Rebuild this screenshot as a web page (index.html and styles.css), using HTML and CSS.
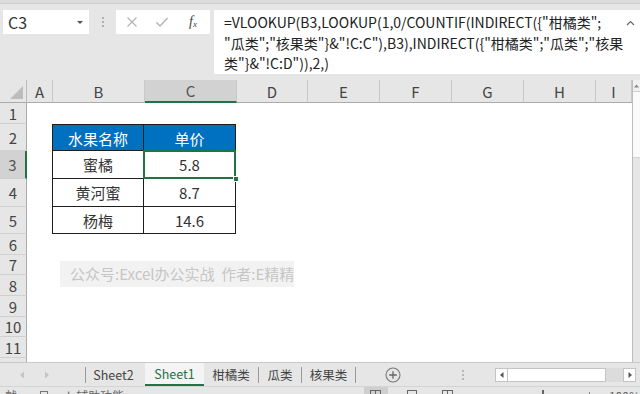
FILE: index.html
```html
<!DOCTYPE html>
<html lang="zh">
<head>
<meta charset="utf-8">
<title>Excel</title>
<link rel="stylesheet" href="styles.css">
</head>
<body>
<div class="app">
  <div class="topband"></div>
  <div class="fbar">
    <div class="namebox"><span class="nb-text">C3</span><span class="nb-arrow"></span></div>
    <div class="grip"><i></i><i></i><i></i></div>
    <div class="fbtns">
      <svg class="ico-x" width="12" height="12" viewBox="0 0 12 12"><path d="M1.5 1.5 L10.5 10.5 M10.5 1.5 L1.5 10.5" stroke="#b4b4b4" stroke-width="1.3" fill="none"/></svg>
      <svg class="ico-ok" width="14" height="12" viewBox="0 0 14 12"><path d="M1.5 6.5 L5 10 L12.5 2" stroke="#b4b4b4" stroke-width="1.5" fill="none"/></svg>
      <span class="fx">f<sub>x</sub></span>
    </div>
    <div class="formula">=VLOOKUP(B3,LOOKUP(1,0/COUNTIF(INDIRECT({"柑橘类";<br>"瓜类";"核果类"}&amp;"!C:C"),B3),INDIRECT({"柑橘类";"瓜类";"核果<br>类"}&amp;"!C:D")),2,)<svg class="collapse" width="9" height="6" viewBox="0 0 9 6"><path d="M1 5 L4.5 1.5 L8 5" stroke="#666" stroke-width="1.2" fill="none"/></svg></div>
  </div>

  <div class="sheet">
    <div class="grid-wrap">
      <div class="grid">
        <div class="corner"><span class="tri"></span></div>
        <div class="ch">A</div>
        <div class="ch">B</div>
        <div class="ch ch-sel">C</div>
        <div class="ch">D</div>
        <div class="ch">E</div>
        <div class="ch">F</div>
        <div class="ch">G</div>
        <div class="ch">H</div>
        <div class="ch">I</div>

        <div class="rh r1">1</div>
        <div class="rh r2">2</div>
        <div class="rh rh-sel r3">3</div>
        <div class="rh r4">4</div>
        <div class="rh r5">5</div>
        <div class="rh r6">6</div>
        <div class="rh r7">7</div>
        <div class="rh r8">8</div>
        <div class="rh r9">9</div>
        <div class="rh r10">10</div>
        <div class="rh r11">11</div>
        <div class="rh r12">12</div>

        <div class="tbl">
          <div class="th">水果名称</div>
          <div class="th">单价</div>
          <div class="td">蜜橘</div>
          <div class="td td-sel">5.8<span class="handle"></span></div>
          <div class="td">黄河蜜</div>
          <div class="td">8.7</div>
          <div class="td">杨梅</div>
          <div class="td">14.6</div>
        </div>
      </div>
      <div class="watermark">公众号:Excel办公实战&nbsp; 作者:E精精</div>
    </div>
    <div class="vscroll">
      <div class="vs-up"><svg width="5" height="4" viewBox="0 0 5 4"><path d="M0 3.5 L2.5 0.5 L5 3.5 Z" fill="#888"/></svg></div>
      <div class="vs-thumb"></div>
      <div class="vs-track"></div>
    </div>
  </div>

  <div class="tabs">
    <div class="nav">
      <svg width="6" height="8" viewBox="0 0 6 8"><path d="M5 0.5 L1 4 L5 7.5 Z" fill="#c4c4c4"/></svg>
      <svg width="6" height="8" viewBox="0 0 6 8"><path d="M1 0.5 L5 4 L1 7.5 Z" fill="#c4c4c4"/></svg>
    </div>
    <span class="sep"></span>
    <div class="tab t-sheet2">Sheet2</div>
    <div class="tab tab-active">Sheet1</div>
    <div class="tab t-gj">柑橘类</div>
    <span class="sep"></span>
    <div class="tab t-g">瓜类</div>
    <span class="sep"></span>
    <div class="tab t-hg">核果类</div>
    <span class="sep"></span>
    <div class="addsheet">
      <svg width="16" height="16" viewBox="0 0 16 16"><circle cx="8" cy="8" r="7" stroke="#777" stroke-width="1.1" fill="none"/><path d="M8 4.2 V11.8 M4.2 8 H11.8" stroke="#666" stroke-width="1.3"/></svg>
    </div>
    <div class="hgrip"><i></i><i></i><i></i></div>
    <div class="hscroll">
      <div class="hs-left"><svg width="4" height="6" viewBox="0 0 4 6"><path d="M3.5 0 L0 3 L3.5 6 Z" fill="#555"/></svg></div>
      <div class="hs-thumb"></div>
      <div class="hs-track"></div>
      <div class="hs-right"><svg width="4" height="6" viewBox="0 0 4 6"><path d="M0.5 0 L4 3 L0.5 6 Z" fill="#555"/></svg></div>
    </div>
  </div>

  <div class="status">
    <span class="st-ready">就绪</span>
    <span class="st-box"></span>
    <span class="st-acc">⅃</span>
    <span class="st-text">辅助功能: 调查</span>
    <span class="st-views">
      <span class="view view-on"><span class="vgrid"></span></span>
      <span class="view"><span class="vpage"></span></span>
      <span class="view"><span class="vgrid"></span></span>
    </span>
    <span class="zoom-mark"></span>
    <span class="zoom-plus"></span>
    <span class="zoom-pct">100%</span>
  </div>
</div>
</body>
</html>
```
FILE: styles.css
```css
* { box-sizing: border-box; margin: 0; padding: 0; }

html, body {
  width: 640px;
  height: 394px;
  overflow: hidden;
}

body {
  background: #e6e6e6;
  font-family: "Noto Sans CJK SC", "Noto Sans", sans-serif;
  color: #333;
}

.app {
  display: flex;
  flex-direction: column;
  height: 394px;
}

.topband {
  height: 4px;
  flex: none;
  background: #dcdcdc;
  border-bottom: 1px solid #d0d0d0;
}

/* formula bar */
.fbar {
  height: 76px;
  flex: none;
  display: flex;
  align-items: flex-start;
  padding: 6px 0 0 3px;
}

.namebox {
  flex: none;
  width: 86px;
  height: 24px;
  background: #fff;
  display: flex;
  align-items: center;
  justify-content: space-between;
  padding: 0 6px 0 5px;
  font-size: 16px;
  color: #333;
}

.nb-arrow {
  width: 0;
  height: 0;
  border-left: 3.5px solid transparent;
  border-right: 3.5px solid transparent;
  border-top: 3.5px solid #555;
}

.grip {
  flex: none;
  width: 27px;
  height: 24px;
  display: flex;
  flex-direction: column;
  align-items: center;
  justify-content: center;
  gap: 2px;
}
.grip i {
  width: 2px;
  height: 2px;
  background: #b0b0b0;
}

.fbtns {
  flex: none;
  width: 94px;
  height: 24px;
  background: #fff;
  display: flex;
  align-items: center;
  padding: 0 0 0 10px;
}
.ico-x { margin-left: 0; }
.ico-ok { margin-left: 17px; }
.fx {
  margin-left: 20px;
  font-family: "Liberation Serif", serif;
  font-style: italic;
  font-size: 14px;
  color: #444;
  line-height: 1;
}
.fx sub {
  font-size: 9px;
  vertical-align: -1px;
}

.formula {
  position: relative;
  margin-left: 4px;
  flex: 1;
  min-width: 0;
  height: 64px;
  background: #fff;
  padding: 2px 20px 0 10px;
  font-size: 14px;
  line-height: 20.5px;
  color: #222;
  white-space: nowrap;
  overflow: hidden;
}
.collapse {
  position: absolute;
  right: 5px;
  top: 10px;
}

/* sheet */
.sheet {
  height: 282px;
  flex: none;
  display: flex;
  background: #fff;
}

.grid-wrap {
  position: relative;
  flex: 1;
  min-width: 0;
  overflow: hidden;
  border-right: 1px solid #bdbdbd;
}

.grid {
  display: grid;
  grid-template-columns: 27px 26px 92px 92px 71px 72px 72px 72px 72px;
  grid-template-rows: 23px 21px 27px 28px 28px 27px 21px 20px 21px 21px 20px 21px 21px;
}

.corner {
  grid-column: 1;
  grid-row: 1;
  background: #e6e6e6;
  border-right: 1px solid #bcbcbc;
  border-bottom: 1px solid #ababab;
  display: flex;
  align-items: flex-end;
  justify-content: flex-end;
  padding: 0 3px 3px 0;
}
.tri {
  width: 0;
  height: 0;
  border-left: 13px solid transparent;
  border-bottom: 13px solid #bcbcbc;
}

.ch {
  grid-row: 1;
  background: #e6e6e6;
  border-right: 1px solid #c8c8c8;
  border-bottom: 1px solid #ababab;
  display: flex;
  align-items: center;
  justify-content: center;
  font-size: 15px;
  color: #444;
}
.ch-sel {
  background: #d2d2d2;
  border-bottom: 2px solid #217346;
  color: #555;
}

.rh {
  grid-column: 1;
  background: #e6e6e6;
  border-right: 1px solid #ababab;
  border-bottom: 1px solid #d0d0d0;
  display: flex;
  align-items: center;
  justify-content: center;
  font-size: 15px;
  color: #444;
}
.r1 { grid-row: 2; }
.r2 { grid-row: 3; }
.r3 { grid-row: 4; }
.r4 { grid-row: 5; }
.r5 { grid-row: 6; }
.r6 { grid-row: 7; }
.r7 { grid-row: 8; }
.r8 { grid-row: 9; }
.r9 { grid-row: 10; }
.r10 { grid-row: 11; }
.r11 { grid-row: 12; }
.r12 { grid-row: 13; }
.rh-sel {
  background: #d2d2d2;
  border-right: 2px solid #217346;
  color: #555;
}

.tbl {
  grid-column: 3 / 5;
  grid-row: 3 / 7;
  display: grid;
  grid-template-columns: 92px 92px;
  grid-template-rows: 27px 28px 28px 27px;
  margin-left: -1px;
}
.th, .td {
  display: flex;
  align-items: center;
  justify-content: center;
  font-size: 15px;
  border-right: 1px solid #1e1e1e;
  border-bottom: 1px solid #1e1e1e;
}
.th:nth-child(odd), .td:nth-child(odd) { border-left: 1px solid #1e1e1e; }
.th {
  background: #0070c0;
  color: #fff;
  border-top: 1px solid #1e1e1e;
  padding-top: 1px;
}
.td { color: #333; }

.td-sel { position: relative; }
.td-sel::after {
  content: "";
  position: absolute;
  left: -1px;
  top: -1px;
  right: -1px;
  bottom: -1px;
  border: 2px solid #217346;
}
.handle {
  position: absolute;
  right: -4px;
  bottom: -4px;
  width: 6px;
  height: 6px;
  background: #217346;
  border: 1px solid #fff;
  z-index: 2;
}

.watermark {
  position: absolute;
  left: 60px;
  top: 181px;
  width: 234px;
  height: 26px;
  background: #f2f2f2;
  color: #c6c6c6;
  font-size: 15px;
  line-height: 26px;
  padding-left: 10px;
  white-space: nowrap;
}

.vscroll {
  width: 7px;
  flex: none;
  background: #e6e6e6;
  display: flex;
  flex-direction: column;
}
.vs-up {
  height: 12px;
  background: #f0f0f0;
  border-bottom: 1px solid #cfcfcf;
  display: flex;
  align-items: center;
  justify-content: center;
}
.vs-thumb { height: 66px; background: #fafafa; border-bottom: 1px solid #d6d6d6; }
.vs-track { flex: 1; background: #e6e6e6; }

/* tabs */
.tabs {
  height: 24px;
  flex: none;
  display: flex;
  align-items: stretch;
  background: #e6e6e6;
  border-top: 1px solid #c8c8c8;
  font-size: 12.5px;
  color: #444;
}
.nav {
  flex: none;
  width: 85px;
  display: flex;
  align-items: center;
  gap: 19px;
  padding-left: 19px;
}
.sep {
  flex: none;
  width: 1px;
  background: #9a9a9a;
  margin: 4px 0 3px;
}
.tab {
  flex: none;
  display: flex;
  align-items: center;
  justify-content: center;
  padding-bottom: 1px;
}
.t-sheet2 { width: 59px; padding-right: 4px; }
.tab-active {
  width: 59px;
  background: #f4f4f4;
  color: #217346;
  border-bottom: 2px solid #217346;
  padding-bottom: 0;
}
.t-gj { width: 54px; }
.t-g { width: 42px; }
.t-hg { width: 53px; }

.addsheet {
  flex: none;
  width: 74px;
  display: flex;
  align-items: center;
  justify-content: center;
}
.hgrip {
  flex: none;
  width: 65px;
  display: flex;
  flex-direction: column;
  align-items: center;
  justify-content: center;
  gap: 2px;
}
.hgrip i { width: 2px; height: 2px; background: #b8b8b8; }

.hscroll {
  flex: none;
  width: 142px;
  display: flex;
  align-items: center;
}
.hs-left, .hs-right {
  flex: none;
  width: 13px;
  height: 14px;
  background: #fff;
  border: 1px solid #c4c4c4;
  display: flex;
  align-items: center;
  justify-content: center;
}
.hs-thumb {
  flex: none;
  width: 98px;
  height: 14px;
  background: #fff;
  border: 1px solid #c4c4c4;
  border-left: none;
}
.hs-track { flex: none; width: 17px; height: 14px; background: #dcdcdc; }

/* status */
.status {
  position: relative;
  flex: 1;
  background: #e6e6e6;
  border-top: 1px solid #d4d4d4;
  font-size: 12px;
  color: #666;
  display: flex;
  align-items: flex-start;
  overflow: hidden;
}
.st-ready { margin: 2px 0 0 5px; line-height: 14px; }
.st-box {
  margin: 4px 0 0 16px;
  width: 10px;
  height: 10px;
  border: 1px solid #777;
  border-bottom: none;
}
.st-acc { margin: 1px 0 0 16px; line-height: 14px; font-size: 12px; }
.st-text { margin: 2px 0 0 6px; line-height: 14px; }
.st-views {
  margin-left: 227px;
  display: flex;
}
.view {
  width: 24px;
  height: 10px;
  display: flex;
  justify-content: center;
  padding-top: 3px;
  margin-right: 12px;
}
.view-on { background: #cfcfcf; }
.vgrid {
  width: 11px;
  height: 10px;
  border: 1px solid #666;
  border-bottom: none;
  background: linear-gradient(90deg, transparent 4px, #666 4px, #666 5px, transparent 5px);
}
.vpage {
  width: 10px;
  height: 10px;
  border: 1px solid #666;
  border-bottom: none;
}
.zoom-mark {
  margin: 3px 0 0 70px;
  width: 3px;
  height: 6px;
  background: #666;
}
.zoom-plus {
  margin: 5px 0 0 45px;
  width: 1px;
  height: 4px;
  background: #888;
}
.zoom-pct { margin: 2px 0 0 19px; line-height: 14px; }
```
